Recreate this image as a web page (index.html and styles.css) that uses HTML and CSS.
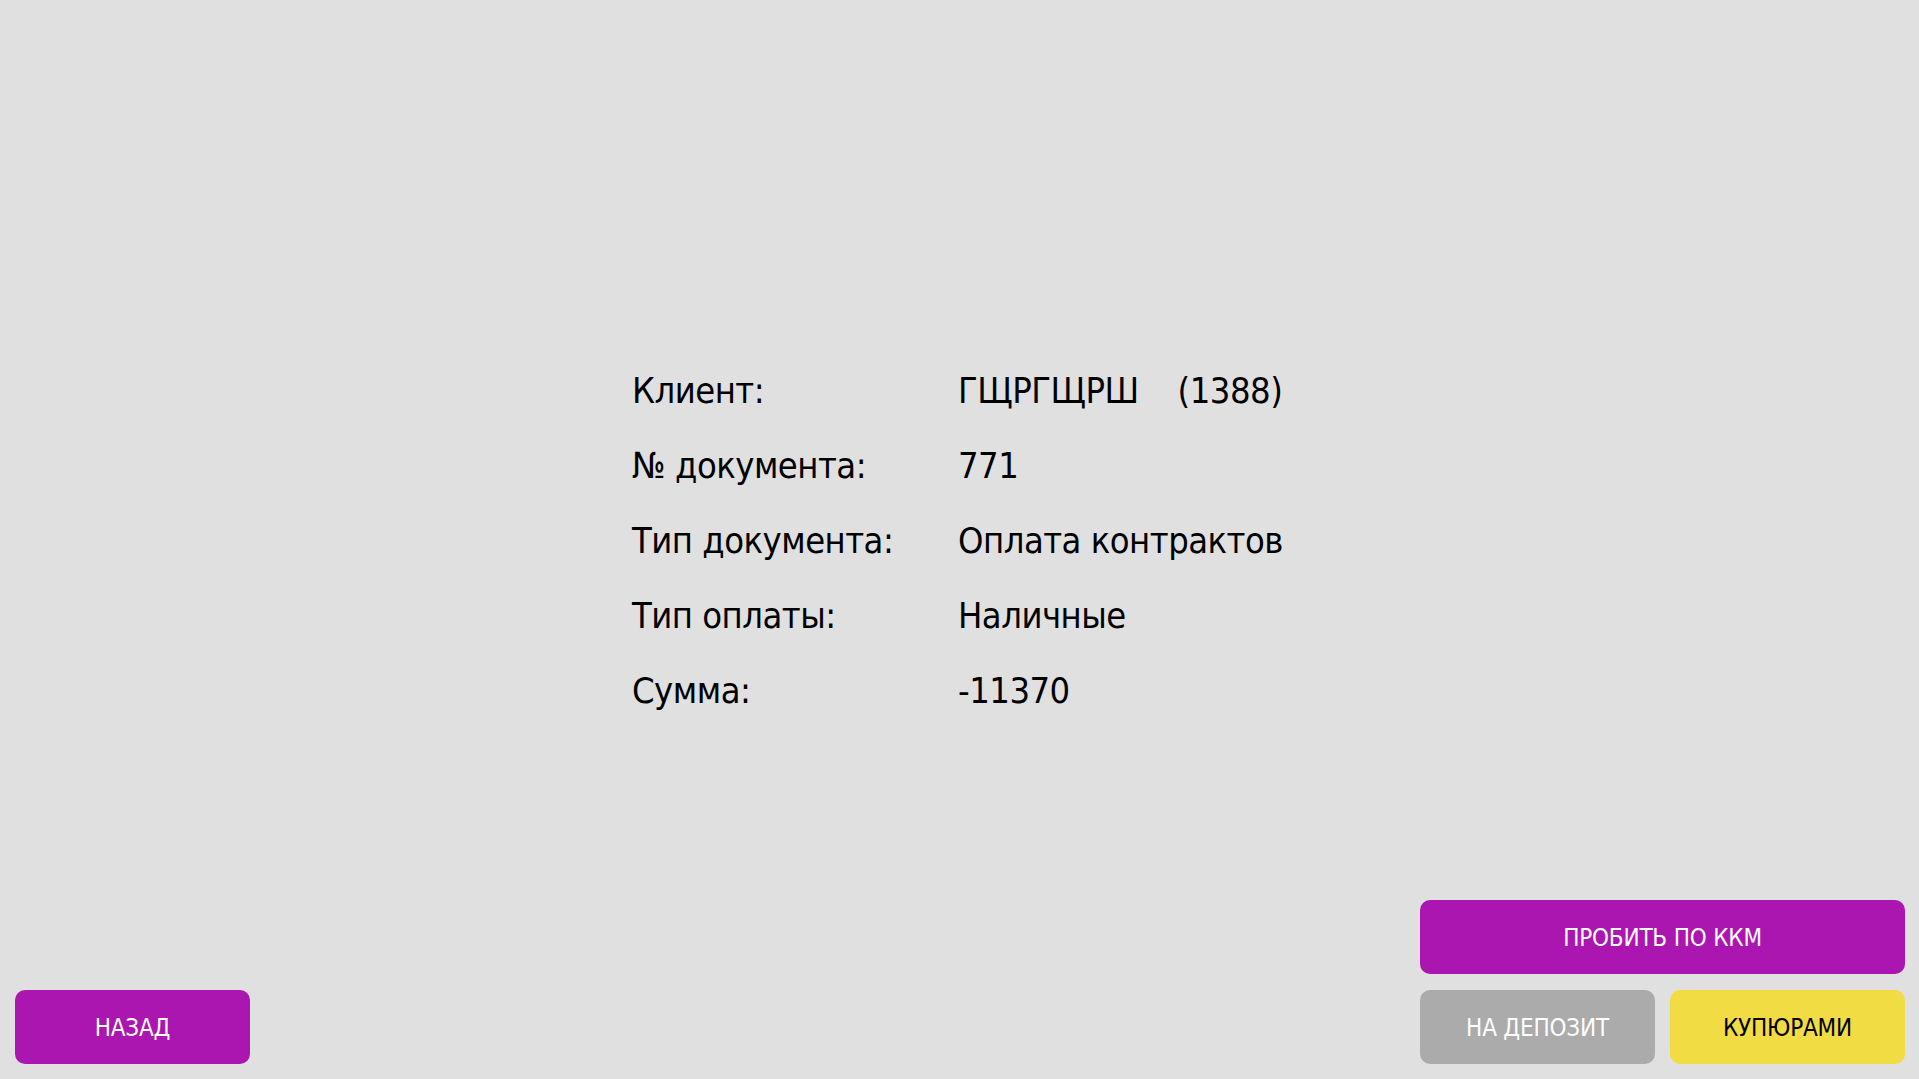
FILE: index.html
```html
<!DOCTYPE html>
<html>
  <head>
    <meta charset="UTF-8" />
    <meta name="viewport" content="width=device-width, initial-scale=1.0" />
    <title>Документ</title>
    <link rel="stylesheet" href="styles.css">
  </head>
  <body>
    <div class="screen">
      <main class="info">
        <div class="label">Клиент:</div>
        <div class="value">ГЩРГЩРШ<span class="client-id">(1388)</span></div>
        <div class="label">№ документа:</div>
        <div class="value">771</div>
        <div class="label">Тип документа:</div>
        <div class="value">Оплата контрактов</div>
        <div class="label">Тип оплаты:</div>
        <div class="value">Наличные</div>
        <div class="label">Сумма:</div>
        <div class="value">-11370</div>
      </main>
      <footer class="actions">
        <button class="btn btn-purple" type="button">НАЗАД</button>
        <div class="actions-right">
          <button class="btn btn-purple btn-wide" type="button">ПРОБИТЬ ПО ККМ</button>
          <button class="btn btn-gray" type="button">НА ДЕПОЗИТ</button>
          <button class="btn btn-yellow" type="button">КУПЮРАМИ</button>
        </div>
      </footer>
    </div>
  </body>
</html>
```
FILE: styles.css
```css
body {
  margin: 0;
  background-color: #e0e0e0;
  color: #000;
  font-family: "DejaVu Sans Condensed", "DejaVu Sans", sans-serif;
}
.screen {
  display: grid;
  height: 100vh;
}
.info,
.actions {
  grid-area: 1 / 1;
}
.info {
  align-self: center;
  justify-self: center;
  margin-top: 2px;
  display: grid;
  grid-template-columns: 326px 329px;
  font-size: 36px;
  line-height: 75px;
  letter-spacing: -0.5px;
  white-space: nowrap;
}
.client-id {
  margin-left: 39px;
}
.actions {
  align-self: end;
  display: flex;
  justify-content: space-between;
  align-items: flex-end;
  padding: 0 14px 15px 15px;
}
.actions-right {
  display: grid;
  grid-template-columns: 235px 235px;
  gap: 16px 15px;
}
.btn {
  width: 235px;
  height: 74px;
  padding: 2px 0 0;
  border: none;
  border-radius: 10px;
  font-family: inherit;
  font-size: 24px;
  letter-spacing: -0.2px;
  color: #fff;
  cursor: pointer;
}
.btn-wide {
  width: auto;
  grid-column: span 2;
}
.btn-purple {
  background-color: #ab15b0;
}
.btn-gray {
  background-color: #ababab;
}
.btn-yellow {
  background-color: #f2dc43;
  color: #000;
}
```
